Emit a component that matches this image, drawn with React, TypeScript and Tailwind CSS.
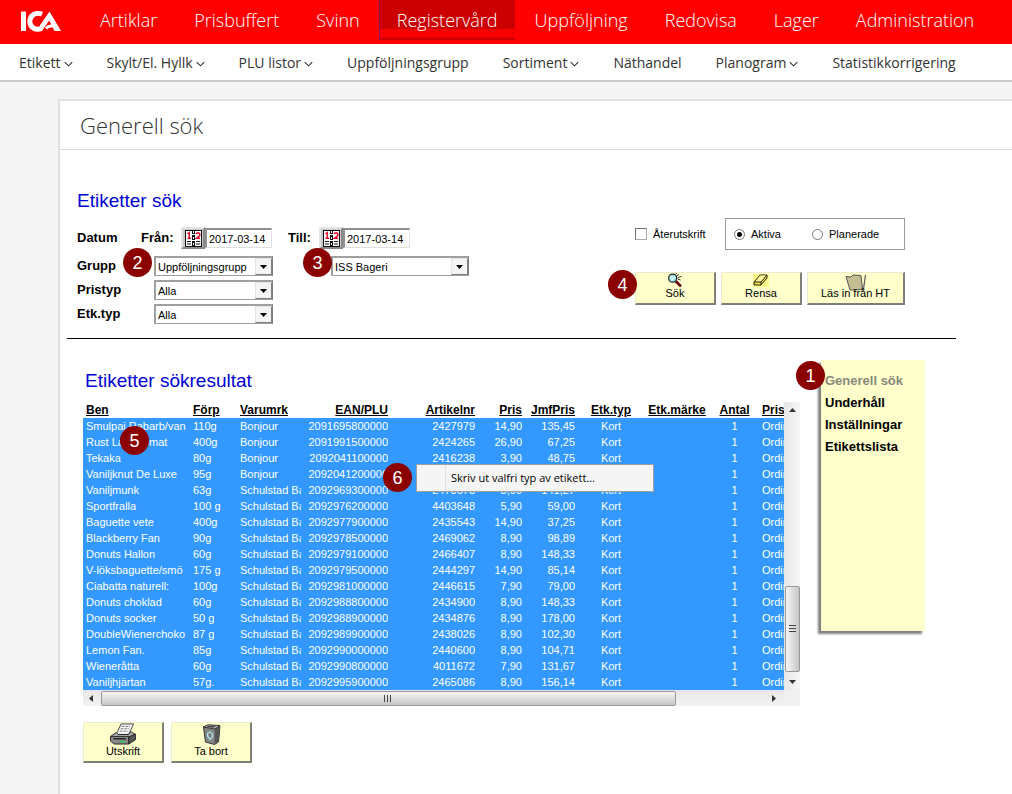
import React from "react";

const mainNav = ["Artiklar", "Prisbuffert", "Svinn", "Registervård", "Uppföljning", "Redovisa", "Lager", "Administration"];

const subNav: { label: string; menu: boolean }[] = [
  { label: "Etikett", menu: true },
  { label: "Skylt/El. Hyllk", menu: true },
  { label: "PLU listor", menu: true },
  { label: "Uppföljningsgrupp", menu: false },
  { label: "Sortiment", menu: true },
  { label: "Näthandel", menu: false },
  { label: "Planogram", menu: true },
  { label: "Statistikkorrigering", menu: false },
];

const columns = [
  { label: "Ben", width: "w-[107px]", align: "text-left" },
  { label: "Förp", width: "w-[47px]", align: "text-left" },
  { label: "Varumrk", width: "w-[67px]", align: "text-left" },
  { label: "EAN/PLU", width: "w-[87px]", align: "text-right" },
  { label: "Artikelnr", width: "w-[87px]", align: "text-right" },
  { label: "Pris", width: "w-[47px]", align: "text-right" },
  { label: "JmfPris", width: "w-[53px]", align: "text-right" },
  { label: "Etk.typ", width: "w-[66px]", align: "text-center" },
  { label: "Etk.märke", width: "w-[66px]", align: "text-center" },
  { label: "Antal", width: "w-[49px]", align: "text-center" },
  { label: "Pris", width: "w-[80px]", align: "text-left" },
];

const rows = [
  ["Smulpaj Rabarb/van", "110g", "Bonjour", "2091695800000", "2427979", "14,90", "135,45"],
  ["Rust Lantbromat", "400g", "Bonjour", "2091991500000", "2424265", "26,90", "67,25"],
  ["Tekaka", "80g", "Bonjour", "2092041100000", "2416238", "3,90", "48,75"],
  ["Vaniljknut De Luxe", "95g", "Bonjour", "2092041200000", "2416246", "8,90", "93,68"],
  ["Vaniljmunk", "63g", "Schulstad Ba", "2092969300000", "2478675", "8,90", "141,27"],
  ["Sportfralla", "100 g", "Schulstad Ba", "2092976200000", "4403648", "5,90", "59,00"],
  ["Baguette vete", "400g", "Schulstad Ba", "2092977900000", "2435543", "14,90", "37,25"],
  ["Blackberry Fan", "90g", "Schulstad Ba", "2092978500000", "2469062", "8,90", "98,89"],
  ["Donuts Hallon", "60g", "Schulstad Ba", "2092979100000", "2466407", "8,90", "148,33"],
  ["V-löksbaguette/smö", "175 g", "Schulstad Ba", "2092979500000", "2444297", "14,90", "85,14"],
  ["Ciabatta naturell:", "100g", "Schulstad Ba", "2092981000000", "2446615", "7,90", "79,00"],
  ["Donuts choklad", "60g", "Schulstad Ba", "2092988800000", "2434900", "8,90", "148,33"],
  ["Donuts socker", "50 g", "Schulstad Ba", "2092988900000", "2434876", "8,90", "178,00"],
  ["DoubleWienerchoko", "87 g", "Schulstad Ba", "2092989900000", "2438026", "8,90", "102,30"],
  ["Lemon Fan.", "85g", "Schulstad Ba", "2092990000000", "2440600", "8,90", "104,71"],
  ["Wieneråtta", "60g", "Schulstad Ba", "2092990800000", "4011672", "7,90", "131,67"],
  ["Vaniljhjärtan", "57g.", "Schulstad Ba", "2092995900000", "2465086", "8,90", "156,14"],
];

function Chevron() {
  return (
    <svg className="mt-1" width="9" height="6" viewBox="0 0 10 6" fill="none" stroke="#333" strokeWidth="1.2" aria-hidden="true">
      <path d="M0.8 0.8 5 5 9.2 0.8" />
    </svg>
  );
}

function Badge({ n, className }: { n: number; className: string }) {
  return (
    <span className={`absolute z-10 flex size-[29px] items-center justify-center rounded-full bg-[#8b0000] text-[18px] leading-none text-white ${className}`}>
      {n}
    </span>
  );
}

function CalendarIcon() {
  return (
    <svg width="17" height="17" viewBox="0 0 17 17" aria-hidden="true">
      <rect width="17" height="17" fill="#111" />
      <rect x="1" y="1" width="6" height="15" fill="#fff" />
      <rect x="10" y="1" width="6" height="15" fill="#fff" />
      <path d="M8 1h1v2H8zM7 4h3v1H7zM8 7h1v2H8zM7 10h3v1H7zM8 13h1v2H8z" fill="#fff" />
      <path d="M2.500 3.700 4.200 2.500V8M2.500 8.200h3.500M11 4l1-1h2l.8 1v1.500L11.500 8.200H15" fill="none" stroke="#e00020" strokeWidth="1.400" />
      <path d="M2 11.500h4M2 14h4M11 11.500h4M11 14h4" stroke="#111" strokeWidth="1" />
    </svg>
  );
}

function DateField({ id, name }: { id: string; name: string }) {
  return (
    <span className="flex items-center">
      <button
        type="button"
        aria-label={name}
        className="flex h-[22px] w-6 items-center justify-center border-2 border-t-[#e4e4e4] border-r-[#888] border-b-[#888] border-l-[#e4e4e4] bg-[#c8c8c8]"
      >
        <CalendarIcon />
      </button>
      <input
        id={id}
        type="text"
        defaultValue="2017-03-14"
        className="h-5 w-[67px] border-t-2 border-r border-b border-l-2 border-t-[#909090] border-r-[#e0e0e0] border-b-[#e0e0e0] border-l-[#909090] bg-white px-0.5 text-[11px] outline-none"
      />
    </span>
  );
}

function Select({ id, value, className, label }: { id: string; value: string; className: string; label?: string }) {
  return (
    <span className={`relative block h-5 ${className}`}>
      <select
        id={id}
        aria-label={label}
        defaultValue={value}
        className="h-full w-full appearance-none border-t-2 border-r border-b border-l-2 border-t-[#a0a0a0] border-r-[#808080] border-b-[#a0a0a0] border-l-[#a0a0a0] bg-white pr-5 pl-0.5 text-[11px] leading-4 outline-none"
      >
        <option>{value}</option>
      </select>
      <span className="pointer-events-none absolute top-0.5 right-px bottom-px flex w-[17px] items-center justify-center border border-t-[#e4e4e4] border-r-[#808080] border-b-[#808080] border-l-[#e4e4e4] bg-[#f4f4f4]">
        <svg width="7" height="4" viewBox="0 0 7 4" aria-hidden="true">
          <path d="M0 0h7L3.500 4z" />
        </svg>
      </span>
    </span>
  );
}

function ToolButton({ label, className, children }: { label: string; className: string; children: React.ReactNode }) {
  return (
    <button
      type="button"
      className={`flex flex-col items-center justify-end border-t border-r-2 border-b-2 border-l border-t-[#ecebd0] border-r-[#808078] border-b-[#808078] border-l-[#ecebd0] bg-[#ffffcc] text-[11px] leading-[13px] ${className}`}
    >
      {children}
      {label}
    </button>
  );
}

function SearchIcon() {
  return (
    <svg width="16" height="15" viewBox="0 0 16 15" aria-hidden="true">
      <path d="m8.500 8.500 5 5" stroke="#6b0d16" strokeWidth="3" strokeLinecap="round" />
      <circle cx="5.500" cy="5.500" r="4.300" fill="#9be7f0" stroke="#222" strokeWidth="1.300" />
      <path d="M3 5.500 5.500 3M4 8l4-4" stroke="#fff" strokeWidth="1.200" />
      <path d="M10 3.500 12 1M11 5l4-1.500M11 6.500l3 1M9 1l.5-1" stroke="#222" strokeWidth="1" />
    </svg>
  );
}

function EraserIcon() {
  return (
    <svg width="16" height="13" viewBox="0 0 16 13" aria-hidden="true">
      <path d="M0 0h16v13H0z" fill="#ffff8c" />
      <path d="M1 8 7 1h7v3l-6 7H1z" fill="#f2df3a" stroke="#222" strokeLinejoin="round" />
      <path d="M7.500 1.500h6L8 8H2z" fill="#fff6a0" />
      <path d="M1 8h7v3M8 8l6-7" fill="none" stroke="#222" />
    </svg>
  );
}

function FolderIcon() {
  return (
    <svg width="22" height="17" viewBox="0 0 22 17" aria-hidden="true">
      <path d="M1 2.500 6 3l2-2 8 .5 1.500 14L5 16z" fill="#c4bd92" stroke="#555" />
      <path d="m17 13 1.500 2L20.500 1" fill="none" stroke="#555" strokeWidth="1.200" />
      <path d="m17 15 1.500-4 1 .5" fill="#ddd" stroke="#666" />
    </svg>
  );
}

function PrinterIcon() {
  return (
    <svg width="28" height="23" viewBox="0 0 28 23" aria-hidden="true">
      <path d="M7 12 12 1h13l-5 11z" fill="#f8f8f8" stroke="#444" />
      <path d="M12.500 3.500h9M11.500 6h9M10.500 8.500h9" stroke="#777" strokeDasharray="3 1" />
      <path d="m1 14 6-4 2 2h11l2-3 5 3-5 4H1z" fill="#b4b4b4" stroke="#222" />
      <path d="M1 14h19v8H5l-4-3z" fill="#8a8a8a" stroke="#222" />
      <path d="m20 14.500 7-3v6l-7 4.500z" fill="#555" stroke="#222" />
      <path d="M4 16.500h13" stroke="#222" strokeWidth="1.500" />
      <path d="M11 19.500h5" stroke="#21cf5a" strokeWidth="1.500" />
    </svg>
  );
}

function BinIcon() {
  return (
    <svg width="19" height="21" viewBox="0 0 19 21" aria-hidden="true">
      <path d="m1.500 3 2 15 9 2.500 4-2.500L18 2z" fill="#858585" stroke="#333" />
      <path d="m13 5-.5 15 4-2.500L18 2z" fill="#555" />
      <path d="M1 3 6 .8l12 .7-5 3.500z" fill="#b5b5b5" stroke="#333" />
      <path d="M4 3 7 2l7 .3-2.500 1.300z" fill="#333" />
      <path d="M5.500 12V9.500L8 8l2.500 2v3L8 15.500z" fill="none" stroke="#a9e0e6" strokeWidth="1.300" />
    </svg>
  );
}

export default function App() {
  return (
    <div className="flex min-h-screen flex-col bg-[#f5f5f5] font-['Liberation_Sans',Arial,sans-serif] text-black">
      <header className="font-['Open_Sans',sans-serif]">
        <nav aria-label="Huvudmeny" className="flex h-11 items-start gap-px overflow-hidden bg-[#ff0000]">
          <a href="#" aria-label="ICA" className="flex h-[42px] w-[81px] shrink-0 items-center pl-5">
            <svg width="42" height="21" viewBox="0 0 42 21" fill="none" stroke="#fff" aria-hidden="true">
              <path d="M3.500 0.500v19.500" strokeWidth="5" />
              <path d="M22 3.200C16 0.800 9.800 4 9.800 10.300c0 6.500 6.500 9.700 12 6.700" strokeWidth="5" />
              <path d="M19.500 15 29.500 0.500 41 20h-6.500L29.200 9.500 22.500 19z" fill="#fff" stroke="none" />
              <path d="M26 17.500c2-2.500 6-3 10-1.500" strokeWidth="3" />
            </svg>
          </a>
          {mainNav.map((label) => (
            <a
              key={label}
              href="#"
              aria-current={label === "Registervård" ? "page" : undefined}
              className={
                label === "Registervård"
                  ? "mr-px flex h-10 items-center border-l border-[#8c1440] bg-[linear-gradient(#cc0000_0px,#cc0000_29px,#fa0000_29px,#f80000_37px,#cc0000_38px)] px-[17px] text-[18px] font-light text-white"
                  : "flex h-10 items-center px-[18px] text-[18px] font-light text-white"
              }
            >
              {label}
            </a>
          ))}
        </nav>
        <nav aria-label="Undermeny" className="flex h-[38px] items-center gap-[34px] overflow-hidden border-b-2 border-[#cccccc] bg-white pl-[19px] text-[14px] text-[#333]">
          {subNav.map((item) => (
            <a key={item.label} href="#" className="flex items-center gap-[3px] whitespace-nowrap">
              {item.label}
              {item.menu && <Chevron />}
            </a>
          ))}
        </nav>
      </header>

      <main className="flex flex-1 flex-col pt-[17px] pl-[58px]">
        <div className="flex-1 border-t-2 border-l-2 border-[#e0e0e0] bg-white">
          <h1 className="flex h-[49px] items-center border-b border-[#d8d8d8] pl-5 font-['Open_Sans',sans-serif] text-[22px] font-light text-[#333]">
            Generell sök
          </h1>

          <div className="mr-14 ml-[7px] pb-8">
            <section className="flex justify-between border-b border-black pt-[39px] pr-[51px] pb-3 pl-[10px]">
              <div>
                <h2 className="text-[19px] leading-6 text-[#0000d4]">Etiketter sök</h2>
                <div className="pt-[13px] text-[13px] font-bold">
                  <div className="flex h-6 items-center">
                    <span className="w-[64px]">Datum</span>
                    <label htmlFor="from" className="w-[40px]">Från:</label>
                    <span className="font-normal"><DateField id="from" name="Välj från-datum" /></span>
                    <label htmlFor="to" className="ml-4 w-[31px]">Till:</label>
                    <span className="font-normal"><DateField id="to" name="Välj till-datum" /></span>
                  </div>
                  <div className="relative mt-1 flex h-6 items-center">
                    <label htmlFor="group" className="w-[77px]">Grupp</label>
                    <span className="font-normal">
                      <Select id="group" value="Uppföljningsgrupp" className="w-[119px]" />
                      <Badge n={2} className="-top-1.5 left-[46px]" />
                    </span>
                    <span className="ml-[58px] font-normal">
                      <Select id="subgroup" label="Uppföljningsgrupp" value="ISS Bageri" className="w-[138px]" />
                      <Badge n={3} className="-top-1.5 left-[226px]" />
                    </span>
                  </div>
                  <div className="flex h-6 items-center">
                    <label htmlFor="pricetype" className="w-[77px]">Pristyp</label>
                    <span className="font-normal"><Select id="pricetype" value="Alla" className="w-[119px]" /></span>
                  </div>
                  <div className="flex h-6 items-center">
                    <label htmlFor="labeltype" className="w-[77px]">Etk.typ</label>
                    <span className="font-normal"><Select id="labeltype" value="Alla" className="w-[119px]" /></span>
                  </div>
                </div>
              </div>

              <div className="pt-[29px] text-[11px]">
                <div className="flex items-center justify-between">
                  <label className="flex items-center gap-1.5">
                    <input type="checkbox" className="size-3 appearance-none border border-t-[#707070] border-r-[#aaa] border-b-[#aaa] border-l-[#707070] bg-white checked:bg-[#555]" />
                    Återutskrift
                  </label>
                  <div role="radiogroup" aria-label="Status" className="flex h-8 w-[180px] items-center border border-[#999] pl-2">
                    <label className="flex w-[78px] items-center gap-1.5">
                      <input
                        type="radio"
                        name="status"
                        defaultChecked
                        className="size-[11px] appearance-none rounded-full border border-[#777] bg-white checked:bg-[radial-gradient(circle,#000_2px,transparent_3px)]"
                      />
                      Aktiva
                    </label>
                    <label className="flex items-center gap-1.5">
                      <input
                        type="radio"
                        name="status"
                        className="size-[11px] appearance-none rounded-full border border-[#777] bg-white checked:bg-[radial-gradient(circle,#000_2px,transparent_3px)]"
                      />
                      Planerade
                    </label>
                  </div>
                </div>
                <div className="relative mt-[22px] flex gap-[5px]">
                  <Badge n={4} className="-top-0.5 -left-[27px]" />
                  <ToolButton label="Sök" className="h-[33px] w-[81px] pb-[3px]"><SearchIcon /></ToolButton>
                  <ToolButton label="Rensa" className="h-[33px] w-[81px] pb-[3px]"><EraserIcon /></ToolButton>
                  <ToolButton label="Läs in från HT" className="h-[33px] w-[98px] pb-[3px]">
                    <span className="-mb-1"><FolderIcon /></span>
                  </ToolButton>
                </div>
              </div>
            </section>

            <section className="mt-[21px] mr-[31px] ml-4 flex items-start gap-[21px]">
              <div className="min-w-0 flex-1 pt-[9px]">
                <h2 className="pl-0.5 text-[19px] leading-6 text-[#0000d4]">Etiketter sökresultat</h2>
                <div className="relative mt-[9px] grid grid-cols-[minmax(0,1fr)_16px]">
                  <div className="overflow-hidden bg-[#3399ff]">
                    <table className="w-[756px] table-fixed border-collapse text-[11px] leading-4">
                      <thead className="bg-white text-[12px]">
                        <tr>
                          {columns.map((c, i) => (
                            <th key={i} scope="col" className={`h-4 p-0 px-[3px] whitespace-nowrap underline underline-offset-1 ${c.width} ${c.align}`}>
                              {c.label}
                            </th>
                          ))}
                        </tr>
                      </thead>
                      <tbody className="text-white">
                        {rows.map((row) => (
                          <tr key={row[3]}>
                            {[...row, "Kort", "", "1", "Ordin"].map((cell, i) => (
                              <td key={i} className={`h-4 p-0 px-[3px] ${columns[i].align}`}>
                                <div className="h-4 overflow-hidden whitespace-nowrap">{cell}</div>
                              </td>
                            ))}
                          </tr>
                        ))}
                      </tbody>
                    </table>
                  </div>
                  <div aria-hidden="true" className="flex flex-col items-center bg-[linear-gradient(90deg,#e6e6e6,#f6f6f6)]">
                    <svg className="mt-1.5" width="7" height="4" viewBox="0 0 7 4"><path d="M0 4h7L3.500 0z" fill="#333" /></svg>
                    <div className="mt-auto flex h-[86px] w-[15px] items-center justify-center rounded-[2px] border border-[#999] bg-[linear-gradient(90deg,#f6f6f6,#c6c6c6)]">
                      <svg width="7" height="8" viewBox="0 0 7 8"><path d="M0 .5h7M0 3.500h7M0 6.500h7" stroke="#444" /></svg>
                    </div>
                    <svg className="mt-2 mb-1.5" width="7" height="4" viewBox="0 0 7 4"><path d="M0 0h7L3.500 4z" fill="#333" /></svg>
                  </div>
                  <div aria-hidden="true" className="flex h-4 items-center bg-[linear-gradient(#e6e6e6,#f4f4f4)]">
                    <svg className="ml-1.5" width="4" height="7" viewBox="0 0 4 7"><path d="M4 0v7L0 3.500z" fill="#333" /></svg>
                    <div className="ml-2 flex h-[15px] w-[82%] items-center justify-center rounded-[2px] border border-[#999] bg-[linear-gradient(#f6f6f6,#c6c6c6)]">
                      <svg width="8" height="7" viewBox="0 0 8 7"><path d="M.5 0v7M3.500 0v7M6.500 0v7" stroke="#444" /></svg>
                    </div>
                    <svg className="mr-2 ml-auto" width="4" height="7" viewBox="0 0 4 7"><path d="M0 0v7l4-3.500z" fill="#333" /></svg>
                  </div>
                  <div className="bg-[#f0f0f0]" />

                  <Badge n={5} className="top-6 left-[37px]" />
                  <Badge n={6} className="top-[61px] left-[300px]" />
                  <div role="menu" className="absolute top-[62px] left-[333px] flex h-7 w-[238px] border border-[#a0a0a0] bg-[#f5f5f5] pl-7">
                    <button type="button" role="menuitem" className="flex-1 border-l border-[#e0e0e0] pl-[5px] text-left font-['Open_Sans',sans-serif] text-[11px]">
                      Skriv ut valfri typ av etikett...
                    </button>
                  </div>
                </div>
                <div className="mt-4 flex gap-[7px]">
                  <ToolButton label="Utskrift" className="h-[41px] w-[81px] pb-[3px]"><PrinterIcon /></ToolButton>
                  <ToolButton label="Ta bort" className="h-[41px] w-[81px] pb-[3px]"><BinIcon /></ToolButton>
                </div>
              </div>

              <aside className="relative min-h-[271px] w-[104px] bg-[#ffffcc] px-1 pt-[10px] shadow-[-3px_3px_2px_#808080]">
                <Badge n={1} className="top-px -left-[25px]" />
                <nav aria-label="Etiketter" className="flex flex-col text-[13px] leading-[22px] font-bold whitespace-nowrap">
                  <a href="#" aria-current="page" className="text-[#88887a]">Generell sök</a>
                  <a href="#">Underhåll</a>
                  <a href="#">Inställningar</a>
                  <a href="#">Etikettslista</a>
                </nav>
              </aside>
            </section>
          </div>
        </div>
      </main>
    </div>
  );
}
